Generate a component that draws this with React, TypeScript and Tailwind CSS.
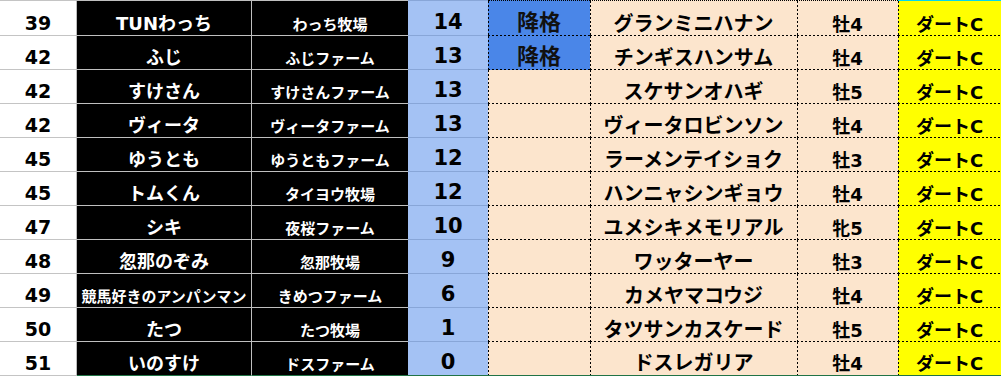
import { clsx } from "clsx";

type Row = {
  rank: string;
  owner: string;
  farm: string;
  pts: string;
  tag?: string;
  horse: string;
  sex: string;
};

const rows: Row[] = [
  { rank: "39", owner: "TUNわっち", farm: "わっち牧場", pts: "14", tag: "降格", horse: "グランミニハナン", sex: "牡4" },
  { rank: "42", owner: "ふじ", farm: "ふじファーム", pts: "13", tag: "降格", horse: "チンギスハンサム", sex: "牡4" },
  { rank: "42", owner: "すけさん", farm: "すけさんファーム", pts: "13", horse: "スケサンオハギ", sex: "牡5" },
  { rank: "42", owner: "ヴィータ", farm: "ヴィータファーム", pts: "13", horse: "ヴィータロビンソン", sex: "牡4" },
  { rank: "45", owner: "ゆうとも", farm: "ゆうともファーム", pts: "12", horse: "ラーメンテイショク", sex: "牡3" },
  { rank: "45", owner: "トムくん", farm: "タイヨウ牧場", pts: "12", horse: "ハンニャシンギョウ", sex: "牡4" },
  { rank: "47", owner: "シキ", farm: "夜桜ファーム", pts: "10", horse: "ユメシキメモリアル", sex: "牝5" },
  { rank: "48", owner: "忽那のぞみ", farm: "忽那牧場", pts: "9", horse: "ワッターヤー", sex: "牡3" },
  { rank: "49", owner: "競馬好きのアンパンマン", farm: "きめつファーム", pts: "6", horse: "カメヤマコウジ", sex: "牡4" },
  { rank: "50", owner: "たつ", farm: "たつ牧場", pts: "1", horse: "タツサンカスケード", sex: "牡5" },
  { rank: "51", owner: "いのすけ", farm: "ドスファーム", pts: "0", horse: "ドスレガリア", sex: "牡4" },
];

// every cell: centred text sitting near the bottom, like a spreadsheet
const cell = "flex items-end justify-center pb-[2px] leading-none font-bold whitespace-nowrap";

// excel-ish dotted grid (left + bottom edge) drawn as background stripes
const peach =
  "[background:repeating-linear-gradient(to_bottom,#000_0_2px,transparent_2px_4px)_left_top/1px_100%_no-repeat,repeating-linear-gradient(to_right,#000_0_2px,transparent_2px_4px)_left_bottom/100%_1px_no-repeat,#fce5cd]";
const peachLast =
  "[background:repeating-linear-gradient(to_bottom,#000_0_2px,transparent_2px_4px)_left_top/1px_100%_no-repeat,#fce5cd]";
const blue =
  "[background:repeating-linear-gradient(to_bottom,#000_0_2px,transparent_2px_4px)_left_top/1px_100%_no-repeat,repeating-linear-gradient(to_right,#000_0_2px,transparent_2px_4px)_left_bottom/100%_1px_no-repeat,#4a86e8]";
const yellow =
  "[background:repeating-linear-gradient(to_bottom,#000_0_2px,transparent_2px_4px)_left_top/1px_100%_no-repeat,repeating-linear-gradient(to_right,#000_0_2px,transparent_2px_4px)_left_bottom/100%_1px_no-repeat,#ffff00]";
const yellowLast =
  "[background:repeating-linear-gradient(to_bottom,#000_0_2px,transparent_2px_4px)_left_top/1px_100%_no-repeat,#ffff00]";

export default function App() {
  return (
    <div className="w-[1001px] h-[376px] overflow-hidden bg-white font-['DejaVu_Sans','Noto_Sans_CJK_JP',sans-serif]">
      {rows.map((r, i) => {
        const first = i === 0;
        const last = i === rows.length - 1;
        const bg = last ? peachLast : peach;
        return (
          <div key={i} className={clsx("flex", first ? "h-[36px]" : "h-[34px]")}>
            <div
              className={clsx(
                cell,
                "w-[77px] border-r border-b border-r-[#bcbcbc] border-b-[#c4c4c4] text-[19px] text-black",
                first && "border-t border-t-[#c4c4c4]",
                last && "border-b-[#217346]"
              )}
            >
              {r.rank}
            </div>
            <div
              className={clsx(
                cell,
                "w-[175px] bg-black text-white border-r border-b border-[#bfbfbf]",
                r.owner.length > 8 ? "text-[15px]" : "text-[18px]",
                first && "border-t",
                last && "border-b-[#217346]"
              )}
            >
              {r.owner}
            </div>
            <div
              className={clsx(
                cell,
                "w-[156px] bg-black text-white text-[15px] border-b border-[#bfbfbf]",
                first && "border-t",
                last && "border-b-[#217346]"
              )}
            >
              {r.farm}
            </div>
            <div
              className={clsx(
                cell,
                "w-[80px] bg-[#a4c2f4] text-black text-[21px] border-b border-[#88a6d8]",
                first && "border-t",
                last && "border-b-[#217346]"
              )}
            >
              {r.pts}
            </div>
            <div
              className={clsx(
                cell,
                "w-[102px] text-[22px] text-[#111]",
                r.tag ? blue : bg,
                first && "border-t border-dotted border-black",
                last && "border-b border-[#217346]"
              )}
            >
              {r.tag}
            </div>
            <div
              className={clsx(
                cell,
                "w-[207px] text-black text-[20px]",
                bg,
                first && "border-t border-dotted border-black",
                last && "border-b border-[#217346]"
              )}
            >
              {r.horse}
            </div>
            <div
              className={clsx(
                cell,
                "w-[101px] text-black text-[18px]",
                bg,
                first && "border-t border-dotted border-black",
                last && "border-b border-[#217346]"
              )}
            >
              {r.sex}
            </div>
            <div
              className={clsx(
                cell,
                "w-[103px] text-black text-[18px]",
                last ? yellowLast : yellow,
                first && "border-t border-t-[#00d8f0]",
                last && "border-b border-[#217346]"
              )}
            >
              ダートC
            </div>
          </div>
        );
      })}
    </div>
  );
}
